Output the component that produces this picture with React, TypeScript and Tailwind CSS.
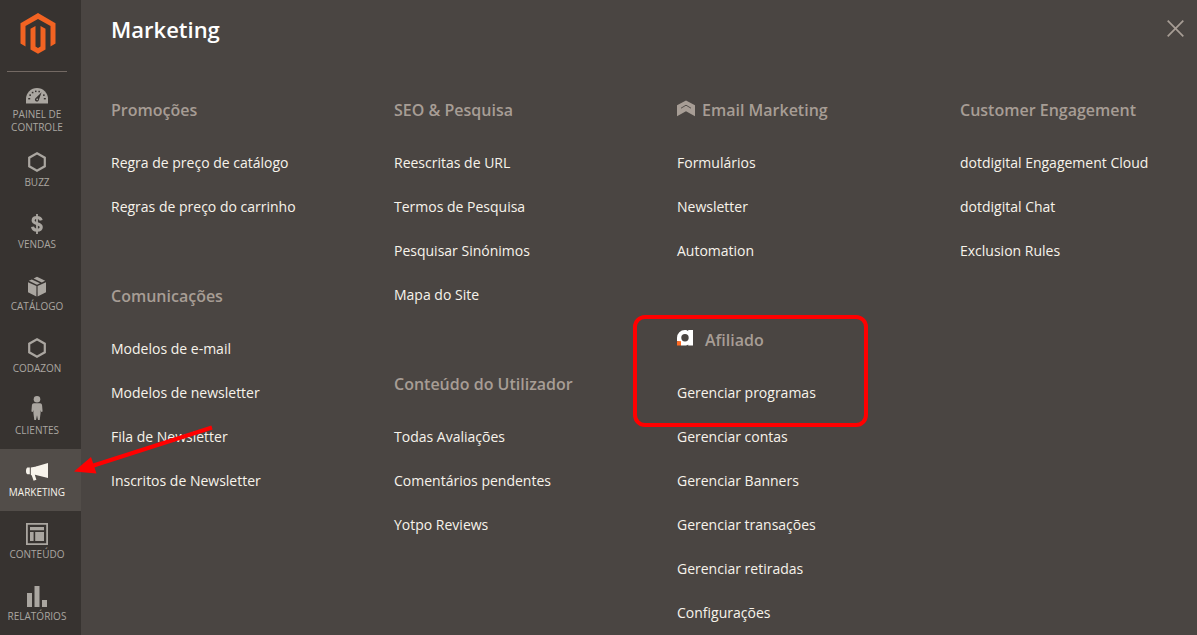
import type { ReactNode } from "react";

type Group = { title: string; icon?: ReactNode; iconGap?: string; items: string[] };

const Hexagon = () => (
  <svg width="18" height="20" viewBox="0 0 18 20" fill="none" stroke="currentColor" strokeWidth="2.2">
    <path d="M9 1.3 16.8 5.7V14.3L9 18.7 1.2 14.3V5.7Z" />
  </svg>
);

const Gauge = () => (
  <svg width="22" height="16" viewBox="0 0 22 16">
    <path fill="currentColor" d="M0 15.6V11A11 11 0 0 1 22 11V15.6Z" />
    <g fill="#373330">
      <path d="M15.6 4.2 12.9 11.8A2 2 0 1 1 10 9.8Z" />
      <rect x="2.2" y="10" width="2" height="1.4" />
      <rect x="17.8" y="10" width="2" height="1.4" />
      <rect x="3.3" y="6.4" width="1.7" height="1.5" />
      <rect x="17" y="6.4" width="1.7" height="1.5" />
      <rect x="5.8" y="3.8" width="1.6" height="1.5" />
      <rect x="9" y="2.6" width="1.5" height="1.5" />
      <rect x="12.4" y="2.8" width="1.5" height="1.5" />
    </g>
    <circle cx="11.2" cy="11.4" r=".8" fill="currentColor" />
  </svg>
);

const Dollar = () => (
  <svg width="12" height="20" viewBox="0 0 12 20" fill="none" stroke="currentColor">
    <path strokeWidth="3" d="M10.2 6.4C9.8 4.5 8.3 3.5 6 3.5 3.6 3.5 2.1 4.6 2.1 6.4 2.1 10.6 10.3 8.8 10.3 13 10.3 15.1 8.6 16.2 6 16.2 3.4 16.2 1.8 15 1.5 12.8" />
    <path strokeWidth="1.8" d="M6 0V20" />
  </svg>
);

const Box = () => (
  <svg width="18" height="21" viewBox="0 0 18 21" fill="currentColor">
    <path d="M0 6.2 8.4 9.9V20.4L0 16.2Z" />
    <path d="M18 6.2 9.6 9.9V20.4L18 16.2Z" />
    <path d="M.8 4.8 3.8 3.4 12 7.3 9 8.7Z" />
    <path d="M5.6 2.5 9 .8 17.2 4.8 13.8 6.4Z" />
  </svg>
);

const Person = () => (
  <svg width="12" height="28" viewBox="0 0 12 28" fill="currentColor">
    <circle cx="6" cy="3.3" r="3.3" />
    <path d="M3 7.2H9C10.6 7.2 11 8.2 11.1 9.6L11.6 15.4 10.2 16 9.6 14V17L8.7 24H7L6 19.2 5 24H3.3L2.4 17V14L1.8 16 .4 15.4.9 9.6C1 8.2 1.4 7.2 3 7.2Z" />
  </svg>
);

const Megaphone = () => (
  <svg width="22" height="18" viewBox="0 0 22 18" fill="currentColor">
    <path d="M22 0V15L10 12V3.6Z" />
    <path d="M4.8 4.4 10.5 3.5V12L8.8 11.8 10.4 16.8 7.6 17.8 5.8 12.6 4.8 11.8Z" />
    <path d="M3.8 4.6V11.2H1.4C.5 10.9 0 9.8 0 8S.5 4.9 1.4 4.6Z" />
  </svg>
);

const Layout = () => (
  <svg width="22" height="22" viewBox="0 0 22 22" fill="currentColor">
    <path fillRule="evenodd" d="M0 0H22V22H0ZM1.8 1.8V20.2H20.2V1.8Z" />
    <path d="M4 4H18V7.2H4ZM4 9H7.6V18H4ZM9.2 9H18V18H9.2Z" />
  </svg>
);

const Bars = () => (
  <svg width="20" height="21" viewBox="0 0 20 21" fill="currentColor">
    <path d="M0 7H5V21H0ZM7.5 0H12.5V21H7.5ZM15 14H20V21H15Z" />
  </svg>
);

const Logo = () => (
  <svg width="36" height="42" viewBox="0 0 36 42" fill="#f26322">
    <path d="M18 0 35.5 10.2V30.6L30.5 33.4V13L18 5.9 5.5 13V33.5L.5 30.6V10.2Z" />
    <path d="M10.5 15.8 15.5 13V33.5L18 34.9 20.5 33.5V13L25.5 15.8V36.4L18 40.7 10.5 36.4Z" />
  </svg>
);

const Chevrons = () => (
  <svg width="18" height="17" viewBox="0 0 18 17" fill="currentColor">
    <path d="M9 .5 18 5.2V16.3L9 11.2 0 16.3V5.2Z" />
    <path d="M4 8.2 9 5.2 14 8.2" fill="none" stroke="#4a4542" strokeWidth=".9" />
  </svg>
);

const AffiliateMark = () => (
  <svg width="16" height="16" viewBox="0 0 16 16">
    <path fill="#fff" d="M7.8 0C9.4 0 10.4.4 11.2 1.2V0H16V15.5H11.2V14.4C10.4 15.1 9.4 15.5 7.8 15.5H4V12L0 11V7.8A7.8 7.8 0 0 1 7.8 0Z" />
    <circle cx="8" cy="7.8" r="3.7" fill="#4a4542" />
    <path fill="#ff6a22" d="M0 11.2H4V15.5H0Z" />
  </svg>
);

const menu: { label: string; icon: ReactNode; active?: boolean }[] = [
  { label: "Buzz", icon: <Hexagon /> },
  { label: "Vendas", icon: <Dollar /> },
  { label: "Catálogo", icon: <Box /> },
  { label: "Codazon", icon: <Hexagon /> },
  { label: "Clientes", icon: <Person /> },
  { label: "Marketing", icon: <Megaphone />, active: true },
  { label: "Conteúdo", icon: <Layout /> },
  { label: "Relatórios", icon: <Bars /> },
];

const columns: Group[][] = [
  [
    { title: "Promoções", items: ["Regra de preço de catálogo", "Regras de preço do carrinho"] },
    {
      title: "Comunicações",
      items: ["Modelos de e-mail", "Modelos de newsletter", "Fila de Newsletter", "Inscritos de Newsletter"],
    },
  ],
  [
    { title: "SEO & Pesquisa", items: ["Reescritas de URL", "Termos de Pesquisa", "Pesquisar Sinónimos", "Mapa do Site"] },
    { title: "Conteúdo do Utilizador", items: ["Todas Avaliações", "Comentários pendentes", "Yotpo Reviews"] },
  ],
  [
    { title: "Email Marketing", icon: <Chevrons />, iconGap: "gap-[7px]", items: ["Formulários", "Newsletter", "Automation"] },
    {
      title: "Afiliado",
      icon: <AffiliateMark />,
      iconGap: "gap-3",
      items: [
        "Gerenciar programas",
        "Gerenciar contas",
        "Gerenciar Banners",
        "Gerenciar transações",
        "Gerenciar retiradas",
        "Configurações",
      ],
    },
  ],
  [{ title: "Customer Engagement", items: ["dotdigital Engagement Cloud", "dotdigital Chat", "Exclusion Rules"] }],
];

function MenuGroup({ group }: { group: Group }) {
  return (
    <section>
      <h2 className={`mb-[21px] flex h-5 items-center text-base leading-5 font-semibold text-[#a79d95] ${group.iconGap ?? ""}`}>
        {group.icon && <span className="-mt-1 shrink-0">{group.icon}</span>}
        {group.title}
      </h2>
      <ul>
        {group.items.map((item) => (
          <li key={item}>
            <a href="#" className="block py-3 text-sm leading-5 whitespace-nowrap text-[#f7f3eb]">
              {item}
            </a>
          </li>
        ))}
      </ul>
    </section>
  );
}

export default function App() {
  return (
    <div className="relative flex h-screen overflow-hidden bg-[#4a4542] font-['Open_Sans',sans-serif]">
      <nav className="w-[81px] shrink-0 bg-[#373330] text-[10px] leading-[13px] text-[#aaa6a0] uppercase">
        <a href="#" aria-label="Magento" className="mr-[14px] ml-[7px] flex h-[72px] justify-center border-b border-[#736963] pt-[13px] pl-px">
          <Logo />
        </a>
        <a href="#" className="flex h-[67px] flex-col items-center pr-[7px] text-center">
          <span className="flex h-9 items-end justify-center pt-4 pb-1">
            <Gauge />
          </span>
          <span className="w-16">Painel de Controle</span>
        </a>
        {menu.map(({ label, icon, active }) => (
          <a
            key={label}
            href="#"
            className={`flex h-[62px] flex-col items-center pr-[7px] ${active ? "bg-[#524d49] text-[#f7f3eb]" : ""}`}
          >
            <span className="flex h-[37px] items-center pt-[9px]">{icon}</span>
            <span>{label}</span>
          </a>
        ))}
      </nav>
      <main className="min-w-0 grow pl-[30px]">
        <header className="flex h-[100px] items-start justify-between pr-[13px]">
          <h1 className="pt-[14px] text-[22px] leading-[30px] font-semibold text-white">Marketing</h1>
          <button type="button" aria-label="Fechar" className="mt-5 text-[#a79d95]">
            <svg width="17" height="17" viewBox="0 0 17 17" fill="none" stroke="currentColor" strokeWidth="1.7">
              <path d="M.7.7 16.3 16.3M16.3.7.7 16.3" />
            </svg>
          </button>
        </header>
        <div className="-mr-[46px] grid grid-cols-4">
          {columns.map((groups) => (
            <div key={groups[0].title} className="flex flex-col gap-[57px]">
              {groups.map((group) => (
                <MenuGroup key={group.title} group={group} />
              ))}
            </div>
          ))}
        </div>
      </main>
      <svg className="pointer-events-none absolute top-[425px] left-[74px]" width="140" height="50" viewBox="0 0 140 50">
        <path d="M138 2.5 18 41" stroke="#f00" strokeWidth="4" />
        <path d="M0 46.5 17 32 22.5 48.5Z" fill="#f00" />
      </svg>
      <div className="pointer-events-none absolute top-[315px] left-[633px] h-[112px] w-[235px] rounded-xl border-4 border-[#f00]" />
    </div>
  );
}
